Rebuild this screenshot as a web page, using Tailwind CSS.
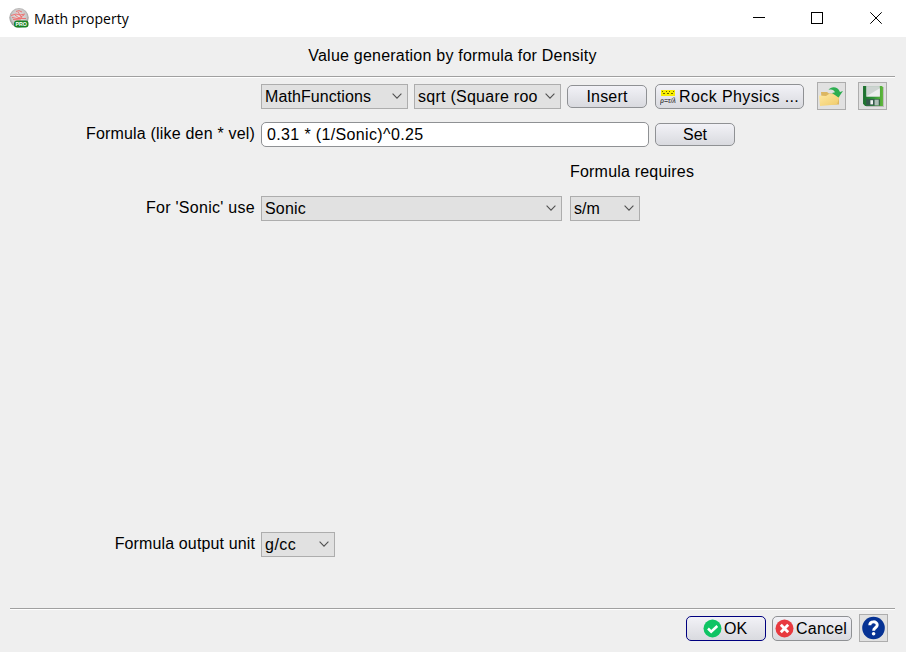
<!DOCTYPE html>
<html lang="en">
<head>
<meta charset="utf-8">
<title>Math property</title>
<script src="https://cdn.jsdelivr.net/npm/@tailwindcss/browser@4"></script>
</head>
<body class="w-[906px] h-[652px] overflow-hidden bg-[#efefef] text-black font-['Liberation_Sans',Arial,sans-serif] text-[16px] leading-[20px] flex flex-col whitespace-nowrap">
<svg class="hidden"><defs>
<symbol id="chev" viewBox="0 0 10 6"><path d="M.6.7 5 5.1 9.4.7" fill="none" stroke="#505050" stroke-width="1.1"/></symbol>
</defs></svg>

<header class="h-[37px] shrink-0 bg-white flex items-center pl-[9px]">
  <svg class="w-[20px] h-[20px] shrink-0 -mt-[1px]" viewBox="0 0 20 20">
    <defs><radialGradient id="ball" cx=".5" cy=".45" r=".55"><stop offset="0" stop-color="#e9dfdf"/><stop offset=".7" stop-color="#cbc8c8"/><stop offset="1" stop-color="#8a8a8a"/></radialGradient></defs>
    <circle cx="10" cy="9.8" r="9.7" fill="url(#ball)"/>
    <path d="M7 3.500q3-2 6 .5M2 7.500l5-1.500 4 1 5-1M3 9.500l5 1 9 0M6 7l4 3 5-3M9 4l4 6M4 11.500l8 .5" fill="none" stroke="#ee6a6a" stroke-width=".9"/>
    <rect x="5" y="12.500" width="14.500" height="7" rx="3" fill="#178224"/>
    <text x="6.500" y="18.300" font-size="6.200" font-weight="bold" fill="#fff" textLength="11.500" lengthAdjust="spacingAndGlyphs">PRO</text>
  </svg>
  <span class="ml-[5px] font-['Open_Sans','Noto_Sans',sans-serif] text-[14px] tracking-[0.02px] flex-1">Math property</span>
  <svg class="w-[152px] h-[37px] shrink-0 overflow-visible" viewBox="0 0 152 37" fill="none" stroke="#000"><path d="M-1 17.500h12M57.500 12.500h11v11h-11z" shape-rendering="crispEdges"/><path d="M116.300 12.300l11.400 11.400m0-11.400-11.400 11.400"/></svg>
</header>

<div class="h-[39px] shrink-0 mx-[10px] pr-[1px] flex items-center justify-center pb-[2px]"><span class="tracking-[0.22px]">Value generation by formula for Density</span></div>
<div class="h-[2px] shrink-0 ml-[10px] w-[885px] border-t border-[#a0a0a0] bg-white"></div>

<main class="h-[530px] shrink-0 flex flex-col">
  <div class="mt-[4px] h-[29px] pl-[261px] flex items-center">
    <div class="w-[147px] h-[25px] border border-[#adadad] bg-[#e1e1e1] flex items-center pl-[3px] pr-[5.5px] justify-between"><span class="tracking-[0.08px]">MathFunctions</span><svg class="w-[10px] h-[6px] mb-px"><use href="#chev"/></svg></div>
    <div class="ml-[6px] w-[147px] h-[25px] border border-[#adadad] bg-[#e1e1e1] flex items-center pl-[3px] pr-[5.5px] justify-between"><span class="tracking-[0.26px]">sqrt (Square roo</span><svg class="w-[10px] h-[6px] mb-px"><use href="#chev"/></svg></div>
    <div class="ml-[6px] w-[80px] h-[23px] rounded-[5px] border border-[#8f9194] bg-linear-to-b from-[#f2f2f7] to-[#d9dadf] flex items-center justify-center tracking-[0.2px]">Insert</div>
    <div class="ml-[8px] w-[149px] h-[25px] rounded-[5px] border border-[#8f9194] bg-linear-to-b from-[#f2f2f7] to-[#d9dadf] flex items-center pl-[4px]">
      <svg class="w-[16px] h-[16px] mr-[3px] shrink-0" viewBox="0 0 16 16"><path d="M1 1h14v6H1z" fill="#f8ee00"/><path d="M2 2.500h1m3 0h1m2 0h1m3 0h1M3 4.500h2m2 0h2m2 0h2" stroke="#6b6500"/><text x="0" y="14" font-size="7" font-style="italic" font-weight="bold" fill="#555" textLength="16" lengthAdjust="spacingAndGlyphs">ρ=τ/λ</text></svg>
      <span class="tracking-[0.4px]">Rock Physics ...</span></div>
    <div class="self-start ml-[13px] w-[29px] h-[28px] border border-[#adadad] bg-[#e1e1e1] flex items-center justify-center">
      <svg class="w-[25px] h-[24px]" viewBox="0 0 25 24"><defs><linearGradient id="fold" x2="1" y2="1"><stop stop-color="#ffe9a3"/><stop offset="1" stop-color="#efc966"/></linearGradient></defs><path d="M2 8h6l2 1.500h10v11H3z" fill="#dcb661"/><path d="M0 11.500 7 12l3-2 9 .5 2 1L18 20.500 1 22z" fill="url(#fold)"/><path d="M9.500 6C12 2.300 18.500 2 21 8l3-1-4.500 6.500-6.500-4.500 3-.7C15 6 12.500 4.800 9.500 6z" fill="#2dae50"/></svg></div>
    <div class="self-start ml-[12px] w-[29px] h-[28px] border border-[#adadad] bg-[#e1e1e1] flex items-center justify-center">
      <svg class="w-[22px] h-[22px] overflow-visible" viewBox="0 0 21 21"><defs><linearGradient id="disk" x2="1" y2="0"><stop stop-color="#1c6d2e"/><stop offset=".5" stop-color="#2e9338"/><stop offset="1" stop-color="#5fb73a"/></linearGradient></defs><path d="M2 2h19v19H4z" fill="#9b9b9b" opacity=".5"/><path d="M1 1h18l1 1v18H3l-2-2z" fill="url(#disk)"/><path d="M4 1h13v10H4z" fill="#cdd4d1"/><path d="M4 11 17 3v8z" fill="#eceeee"/><path d="M4 13.500h13v6H4z" fill="#35594b"/><path d="M12 14h4v5.500h-4z" fill="#aebfb7"/><path d="M8 14.500h2.500v4H8z" fill="#f2f5f4"/></svg></div>
  </div>

  <div class="mt-[11px] h-[25px] flex items-center">
    <span class="w-[255px] text-right relative -top-px tracking-[0.19px]">Formula (like den * vel)</span>
    <div class="ml-[6px] w-[388px] h-[25px] rounded-[5px] border border-[#8f9194] bg-white flex items-center pl-[5px] tracking-[0.36px]">0.31 * (1/Sonic)^0.25</div>
    <div class="ml-[6px] w-[80px] h-[23px] rounded-[5px] border border-[#8f9194] bg-linear-to-b from-[#f2f2f7] to-[#d9dadf] flex items-center justify-center">Set</div>
  </div>

  <div class="mt-[15px] h-[20px] pl-[570px] tracking-[0.2px]">Formula requires</div>

  <div class="mt-[14px] h-[25px] flex items-center">
    <span class="w-[255px] text-right relative -top-px tracking-[0.28px]">For 'Sonic' use</span>
    <div class="ml-[6px] w-[301px] h-[25px] border border-[#adadad] bg-[#e1e1e1] flex items-center pl-[3px] pr-[5.5px] justify-between"><span class="tracking-[0.2px]">Sonic</span><svg class="w-[10px] h-[6px] mb-px"><use href="#chev"/></svg></div>
    <div class="ml-[8px] w-[70px] h-[25px] border border-[#adadad] bg-[#e1e1e1] flex items-center pl-[3px] pr-[5.5px] justify-between"><span>s/m</span><svg class="w-[10px] h-[6px] mb-px"><use href="#chev"/></svg></div>
  </div>

  <div class="mt-auto mb-[51px] h-[25px] flex items-center">
    <span class="w-[255px] text-right relative -top-px tracking-[0.13px]">Formula output unit</span>
    <div class="ml-[6px] w-[74px] h-[25px] border border-[#adadad] bg-[#e1e1e1] flex items-center pl-[3px] pr-[5.5px] justify-between"><span class="tracking-[0.5px]">g/cc</span><svg class="w-[10px] h-[6px] mb-px"><use href="#chev"/></svg></div>
  </div>
</main>

<div class="h-[2px] shrink-0 ml-[10px] w-[885px] border-t border-[#a0a0a0] bg-white"></div>
<footer class="mt-[4px] h-[28px] shrink-0 pl-[686px] flex items-center">
  <div class="w-[80px] h-[25px] rounded-[5px] border border-[#00007f] bg-linear-to-b from-[#f2f2f7] to-[#d9dadf] flex items-center pl-[16px]">
    <svg class="w-[19px] h-[19px] mr-[2px]" viewBox="0 0 19 19"><circle cx="9.500" cy="9.500" r="9" fill="#10c464"/><path d="m5 9.500 3.200 3.200L14.300 7" fill="none" stroke="#fff" stroke-width="2.500"/></svg><span class="pt-px">OK</span></div>
  <div class="ml-[6px] w-[80px] h-[25px] rounded-[5px] border border-[#8f9194] bg-linear-to-b from-[#f2f2f7] to-[#d9dadf] flex items-center pl-[2px]">
    <svg class="w-[19px] h-[19px] mr-[2px] shrink-0" viewBox="0 0 19 19"><circle cx="9.500" cy="9.500" r="9" fill="#e8393f"/><path d="m5.800 5.800 7.400 7.400m0-7.400-7.400 7.400" stroke="#fff" stroke-width="2.800"/></svg><span class="pt-px tracking-[0.22px]">Cancel</span></div>
  <div class="ml-[7px] w-[29px] h-[28px] border border-[#adadad] bg-[#e1e1e1] flex items-center justify-center">
    <svg class="w-[24px] h-[24px]" viewBox="0 0 24 24"><circle cx="11.500" cy="12" r="11.300" fill="#063294"/><path d="M7.800 9.200C7.800 4.800 15.200 4.800 15.200 9c0 3-3.600 2.600-3.600 5.700" fill="none" stroke="#fff" stroke-width="3"/><circle cx="11.600" cy="17.800" r="1.800" fill="#fff"/></svg></div>
</footer>
</body>
</html>
